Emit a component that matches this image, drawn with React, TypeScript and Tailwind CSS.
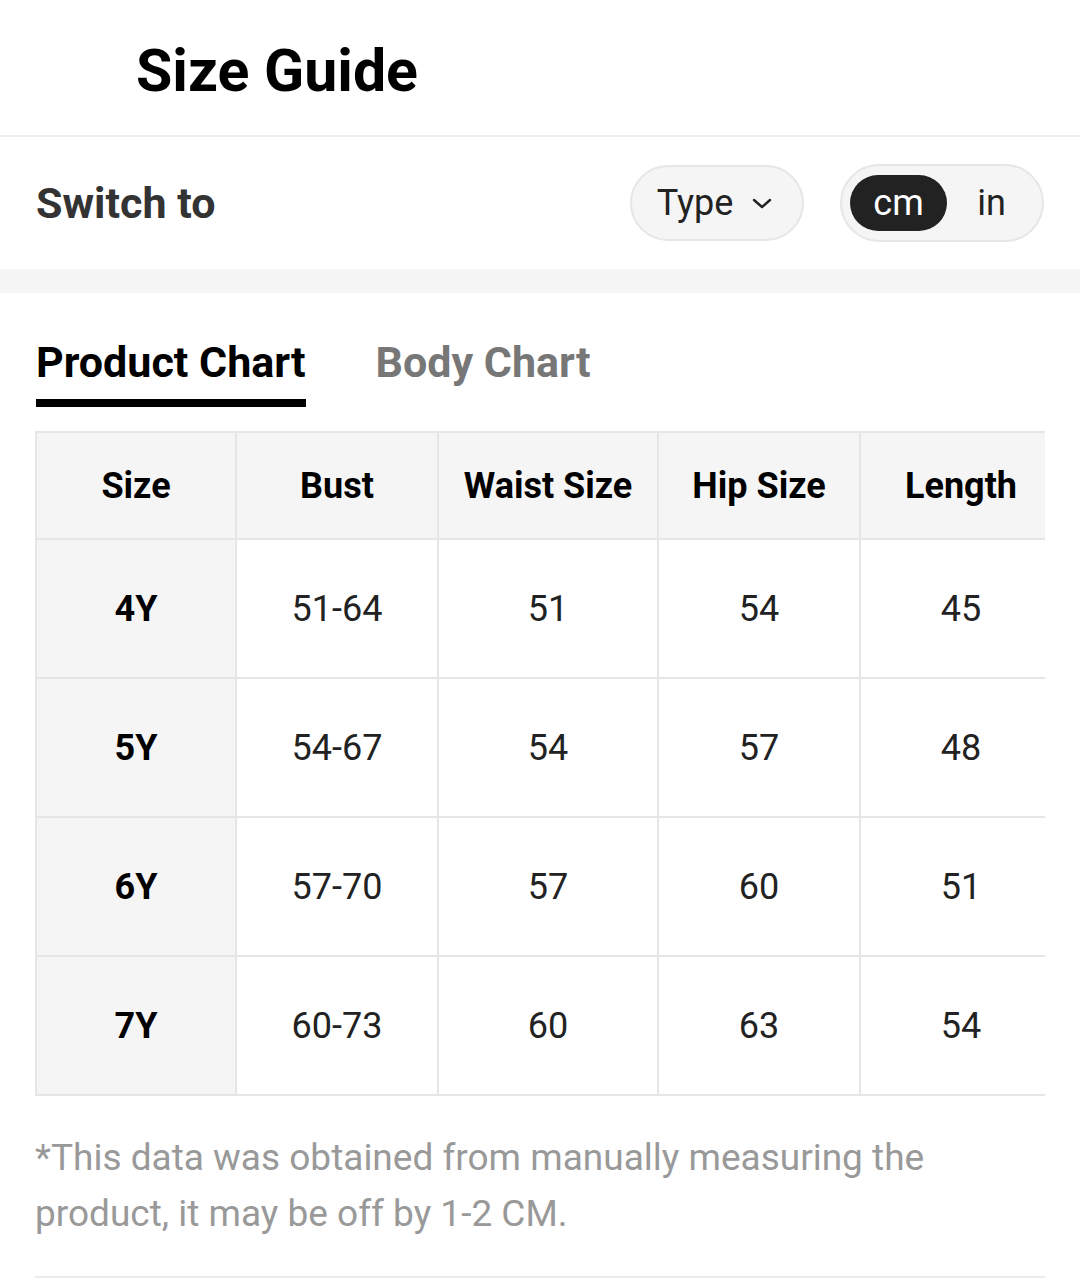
import React from 'react';

const rows = [
  { size: '4Y', bust: '51-64', waist: '51', hip: '54', length: '45' },
  { size: '5Y', bust: '54-67', waist: '54', hip: '57', length: '48' },
  { size: '6Y', bust: '57-70', waist: '57', hip: '60', length: '51' },
  { size: '7Y', bust: '60-73', waist: '60', hip: '63', length: '54' },
];

const cols = ['w-[200px]', 'w-[202px]', 'w-[220px]', 'w-[202px]', 'w-[202px]'];

export default function App() {
  return (
    <div className="w-[1080px] min-h-[1280px] bg-white font-['Roboto',sans-serif] text-[#222]">
      {/* header */}
      <header className="flex h-[137px] items-center border-b-2 border-[#ececec] pl-[136px] pt-[6px]">
        <h1 className="text-[59px] font-bold leading-none text-black">Size Guide</h1>
      </header>

      {/* switch row */}
      <section className="flex h-[132px] items-center justify-between px-[36px]">
        <span className="text-[43px] font-bold text-[#333]">Switch to</span>
        <div className="flex items-center gap-[36px]">
          <button className="flex h-[76px] w-[174px] items-center justify-center gap-[18px] rounded-full border-2 border-[#e6e6e6] bg-[#f5f5f5] pr-[4px] text-[36px] text-[#222]">
            <span>Type</span>
            <svg width="22" height="14" viewBox="0 0 22 14" fill="none" stroke="#222" strokeWidth="2.4" strokeLinecap="round" strokeLinejoin="round">
              <path d="M3 4l8 7 8-7" />
            </svg>
          </button>
          <div className="flex h-[78px] w-[204px] items-center rounded-full border-2 border-[#e6e6e6] bg-[#f5f5f5] pl-[8px] text-[36px]">
            <span className="flex h-[56px] w-[97px] items-center justify-center rounded-full bg-[#222] text-white">cm</span>
            <span className="flex-1 pr-[6px] text-center text-[#222]">in</span>
          </div>
        </div>
      </section>

      <div className="h-[24px] bg-[#f5f5f5]" />

      {/* tabs */}
      <nav className="flex gap-[70px] px-[36px] pt-[44px]">
        <div className="flex flex-col">
          <span className="text-[43px] font-bold leading-[50px] text-black">Product Chart</span>
          <span className="mt-[12px] h-[8px] bg-black" />
        </div>
        <span className="text-[43px] font-bold leading-[50px] text-[#777]">Body Chart</span>
      </nav>

      {/* table */}
      <div className="mx-[35px] mt-[24px] overflow-hidden">
        <table className="w-[1026px] table-fixed border-collapse text-[36px]">
          <thead>
            <tr className="h-[107px] bg-[#f5f5f5]">
              {['Size', 'Bust', 'Waist Size', 'Hip Size', 'Length'].map((h, i) => (
                <th key={h} className={`${cols[i]} border-2 border-[#e6e6e6] text-center font-bold text-black`}>
                  {h}
                </th>
              ))}
            </tr>
          </thead>
          <tbody>
            {rows.map(r => (
              <tr key={r.size} className="h-[139px]">
                <td className="border-2 border-[#e6e6e6] bg-[#f5f5f5] text-center font-bold text-black">{r.size}</td>
                <td className="border-2 border-[#e6e6e6] text-center">{r.bust}</td>
                <td className="border-2 border-[#e6e6e6] text-center">{r.waist}</td>
                <td className="border-2 border-[#e6e6e6] text-center">{r.hip}</td>
                <td className="border-2 border-[#e6e6e6] text-center">{r.length}</td>
              </tr>
            ))}
          </tbody>
        </table>
      </div>

      {/* note */}
      <div className="mx-[35px] border-b-2 border-[#ececec] pb-[34px] pt-[34px]">
        <p className="w-[930px] text-[37px] leading-[56px] text-[#999]">
          *This data was obtained from manually measuring the product, it may be off by 1-2 CM.
        </p>
      </div>
    </div>
  );
}
